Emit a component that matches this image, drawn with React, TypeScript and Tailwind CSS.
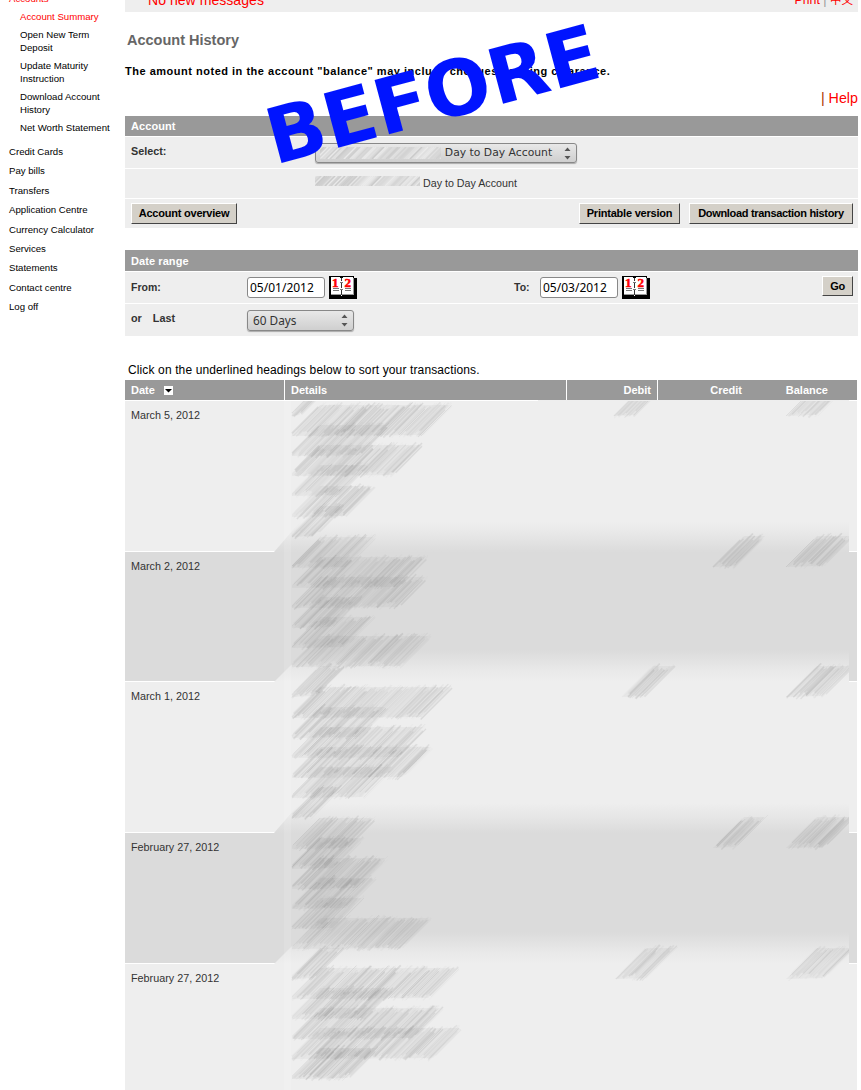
import React from "react";

type Smear = { bottom: number; right: number; left?: number; height?: number; tone?: number };

const detailLines: Smear[] = [
  { bottom: 418, right: 330 }, { bottom: 438, right: 452 }, { bottom: 458, right: 390 },
  { bottom: 478, right: 422 }, { bottom: 498, right: 368 }, { bottom: 519, right: 375 },
  { bottom: 539, right: 344 },
  { bottom: 570, right: 376 }, { bottom: 590, right: 428 }, { bottom: 610, right: 428 },
  { bottom: 630, right: 362 }, { bottom: 650, right: 375 }, { bottom: 669, right: 431 },
  { bottom: 699, right: 344 },
  { bottom: 720, right: 452 }, { bottom: 740, right: 388 }, { bottom: 760, right: 426 },
  { bottom: 780, right: 433 }, { bottom: 800, right: 393 }, { bottom: 820, right: 342 },
  { bottom: 851, right: 376 }, { bottom: 871, right: 364 }, { bottom: 891, right: 388 },
  { bottom: 911, right: 376 }, { bottom: 931, right: 364 }, { bottom: 951, right: 431 },
  { bottom: 981, right: 344 },
  { bottom: 1001, right: 459 }, { bottom: 1021, right: 393 }, { bottom: 1041, right: 443 },
  { bottom: 1061, right: 462 }, { bottom: 1081, right: 378, tone: 1.3 },
];

const amounts: Smear[] = [
  { left: 614, bottom: 418, right: 668 }, { left: 786, bottom: 418, right: 850 },
  { left: 713, bottom: 569, right: 768 }, { left: 786, bottom: 569, right: 856 },
  { left: 622, bottom: 699, right: 677 }, { left: 786, bottom: 699, right: 856 },
  { left: 713, bottom: 850, right: 768 }, { left: 786, bottom: 850, right: 856 },
  { left: 615, bottom: 981, right: 677 }, { left: 786, bottom: 981, right: 856 },
];

const seeded = (seed: number) => {
  let s = seed * 7919 + 17;
  for (let i = 0; i < 3; i++) s = (s * 16807) % 2147483647;
  return () => {
    s = (s * 16807) % 2147483647;
    return s / 2147483647;
  };
};

function Streaks({ item, seed }: { item: Smear; seed: number }) {
  const rnd = seeded(seed);
  const left = item.left ?? 292;
  const h = item.height ?? 36;
  const tone = item.tone ?? 1;
  const cap = item.left ? 2 : 5;
  const run = h - cap;
  const top = item.bottom - h;
  const base = item.right - run;
  const out: React.ReactNode[] = [
    <polygon
      key="body"
      points={`${left},${item.bottom - 2} ${left},${item.bottom - cap} ${left + run - 3},${top + 3} ${item.right - 3},${top + 3} ${base},${item.bottom - 3}`}
      fill="#777"
      fillOpacity={0.065 * tone}
    />,
  ];
  for (let x = left - cap; x < base; x += 1.1) {
    const r = rnd();
    const o = (0.02 + r * r * 0.16) * tone;
    const start = Math.max(x + rnd() * 8, left);
    const end = Math.min(x + h - rnd() * 8, item.right);
    out.push(
      <line
        key={x}
        x1={start}
        y1={item.bottom - (start - x)}
        x2={end}
        y2={item.bottom - (end - x)}
        stroke="#777"
        strokeWidth={0.6 + rnd() * 1.3}
        strokeOpacity={o}
      />
    );
  }
  return <g>{out}</g>;
}

function Smudges() {
  return (
    <svg className="pointer-events-none absolute left-0 top-0" width="861" height="1090" viewBox="0 0 861 1090">
      <defs>
        <linearGradient id="darken" x1="0" y1="0" x2="0" y2="1">
          <stop offset="0" stopColor="#dbdbdb" stopOpacity="0" />
          <stop offset="0.45" stopColor="#dbdbdb" stopOpacity="0.4" />
          <stop offset="1" stopColor="#dbdbdb" />
        </linearGradient>
        <linearGradient id="lighten" x1="0" y1="0" x2="0" y2="1">
          <stop offset="0" stopColor="#eee" stopOpacity="0" />
          <stop offset="0.65" stopColor="#eee" stopOpacity="0.75" />
          <stop offset="1" stopColor="#eee" />
        </linearGradient>
        <clipPath id="tableArea"><rect x="291" y="401" width="558" height="689" /></clipPath>
        <filter id="soft"><feGaussianBlur stdDeviation="0.4" /></filter>
      </defs>
      <path d="M538 400.5H849" stroke="#eee" />
      {[552, 833].map((y) => (
        <polygon key={y} points={`274,${y} 300,${y - 30} 849,${y - 30} 849,${y}`} fill="url(#darken)" />
      ))}
      {[682, 964].map((y) => (
        <polygon key={y} points={`274,${y} 306,${y - 32} 849,${y - 32} 849,${y}`} fill="url(#lighten)" />
      ))}
      <rect x="284" y="401" width="7" height="689" fill="#fff" fillOpacity="0.12" />
      <g clipPath="url(#tableArea)">
        <g filter="url(#soft)">
          {detailLines.map((l, i) => <Streaks key={i} item={l} seed={i + 1} />)}
          {amounts.map((l, i) => <Streaks key={i} item={l} seed={i + 60} />)}
        </g>
      </g>
    </svg>
  );
}

function MaskedNumber({ width, height }: { width: number; height: number }) {
  const rnd = seeded(width);
  const lines: React.ReactNode[] = [];
  for (let x = -10; x < width; x += 2) {
    const light = rnd() > 0.5;
    lines.push(<line key={x} x1={x} y1={height} x2={x + height} y2={0} stroke={light ? "#fff" : "#aaa"} strokeOpacity={rnd() * 0.4} strokeWidth="1.4" />);
  }
  return (
    <svg width={width} height={height} className="shrink-0">
      <rect width={width} height={height} rx="3" fill="#dedede" />
      {lines}
    </svg>
  );
}

function Arrows() {
  return (
    <svg width="7" height="13" viewBox="0 0 7 13" className="shrink-0">
      <path d="M0.5 4 3.5 0.5 6.5 4ZM0.5 9 3.5 12.5 6.5 9Z" fill="#555" />
    </svg>
  );
}

function CalendarIcon() {
  return (
    <svg width="28" height="23" viewBox="0 0 28 23" className="shrink-0" shapeRendering="crispEdges">
      <path d="M0 0H25V2H28V23H0Z" fill="#000" />
      <path d="M2 1H11L12.5 3 14 1H24V18H14L12.5 20 11 18H2Z" fill="#fff" />
      <path d="M2 18.5H24.5V2" fill="none" stroke="#999" />
      <path d="M12.5 2V5M12.5 7V12M12.5 14V19" stroke="#333" />
      <path d="M11 6.5H14M11 13.5H14" stroke="#777" />
      <path d="M4 12.5H9.5M4 14.5H9.5M16 12.5H21.5M16 14.5H21.5" stroke="#777" />
      <g shapeRendering="auto" className="font-['Liberation_Serif',serif] text-[13px] font-bold" fill="#f00" stroke="#f00" strokeWidth="0.5">
        <text x="3" y="10.5">1</text>
        <text x="15.5" y="10.5">2</text>
      </g>
    </svg>
  );
}

function ClassicButton({ children, className }: { children: React.ReactNode; className: string }) {
  return (
    <button className={`shrink-0 whitespace-nowrap border border-t-white border-l-white border-b-[#444] border-r-[#444] bg-[#d4d0c8] p-0 text-center text-[11px] leading-[17px] font-bold text-black ${className}`}>
      {children}
    </button>
  );
}

const subLinks = [
  ["Open New Term", "Deposit"],
  ["Update Maturity", "Instruction"],
  ["Download Account", "History"],
  ["Net Worth Statement"],
];
const links = ["Credit Cards", "Pay bills", "Transfers", "Application Centre", "Currency Calculator", "Services", "Statements", "Contact centre", "Log off"];

const rows = [
  { date: "March 5, 2012", cls: "h-[150px] bg-[#eee]" },
  { date: "March 2, 2012", cls: "h-[129px] bg-[#dbdbdb]" },
  { date: "March 1, 2012", cls: "h-[150px] bg-[#eee]" },
  { date: "February 27, 2012", cls: "h-[130px] bg-[#dbdbdb]" },
  { date: "February 27, 2012", cls: "h-[127px] bg-[#eee]" },
];

const bar = "bg-[#999] pl-1.5 text-[11px] font-bold text-white tracking-[0.08px]";

export default function App() {
  return (
    <div className="relative flex h-[1090px] w-[861px] overflow-hidden bg-white font-['Liberation_Sans',Arial,sans-serif] text-[11px] text-[#333]">
      <nav className="w-[125px] shrink-0 text-[9.65px] leading-[13px] text-black">
        <div className="-mt-2 ml-[9px] h-[13px] text-[#f00]">Accounts</div>
        <ul className="ml-5 mt-[5px] flex flex-col gap-[5px]">
          <li className="text-[#f00]">Account Summary</li>
          {subLinks.map((s) => (
            <li key={s[0]}>{s.map((t) => <div key={t}>{t}</div>)}</li>
          ))}
        </ul>
        <ul className="ml-[9px] mt-[8px]">
          {links.map((l) => <li key={l} className="h-[19.4px] leading-[19.4px]">{l}</li>)}
        </ul>
      </nav>

      <main className="w-[733px] shrink-0">
        <div className="flex h-3 items-end justify-between bg-[#eee] pl-[23px] pr-[5px] text-[13px] leading-[18px] text-[#f00]">
          <span className="mb-[3px] text-[14.1px]">No new messages</span>
          <span className="mb-[3px] whitespace-nowrap font-['Liberation_Sans','Noto_Sans_CJK_SC',sans-serif] text-[12.4px]">Print <span className="text-[#999]">|</span> <span className="text-[11.5px]">中文</span></span>
        </div>
        <h1 className="mt-[19px] pl-[2px] text-[14.5px] leading-[18px] font-bold text-[#666]">Account History</h1>
        <p className="mt-[15px] h-[14px] whitespace-nowrap text-[11px] tracking-[0.51px] leading-[14px] font-bold text-black">
          The amount noted in the account "balance" may include cheques pending clearance.
        </p>
        <div className="mt-[11px] h-[27px] text-right text-[14.3px] leading-[18px] text-[#f00]"><span className="text-[#a30]">|</span> Help</div>

        <section>
          <div className={`${bar} h-5 leading-5`}>Account</div>
          <div className="mt-px flex h-[31px] bg-[#eee]">
            <div className="w-[190px] pl-1.5 pt-[7px] text-[10.8px] leading-[14px] font-bold">Select:</div>
            <div className="mt-[6px] flex h-5 w-[262px] items-center justify-between rounded-[3px] border border-[#888] bg-gradient-to-b from-[#e8e8e8] to-[#cfcfcf] pl-1 pr-[5px] shadow-[0_1px_1px_#aaa]">
              <MaskedNumber width={121} height={12} />
              <span className="-ml-[8px] whitespace-nowrap font-['DejaVu_Sans',sans-serif] text-[10.8px] leading-[18px]">Day to Day Account</span>
              <Arrows />
            </div>
          </div>
          <div className="mt-px flex h-[29px] items-center bg-[#eee] pl-[190px]">
            <div className="mb-[5px] flex"><MaskedNumber width={105} height={10} /></div>
            <span className="ml-[3px] text-[10.7px]">Day to Day Account</span>
          </div>
          <div className="mt-px flex h-[29px] justify-between bg-[#eee] pl-1.5 pr-[5px] pt-1">
            <ClassicButton className="h-[21px] w-[106px] tracking-[-0.22px]">Account overview</ClassicButton>
            <div className="flex gap-[9px]">
              <ClassicButton className="h-[21px] w-[101px] tracking-[-0.22px]">Printable version</ClassicButton>
              <ClassicButton className="h-[21px] w-[164px] tracking-[-0.32px]">Download transaction history</ClassicButton>
            </div>
          </div>
        </section>

        <section className="mt-[22px]">
          <div className={`${bar} h-[21px] leading-[22px]`}>Date range</div>
          <div className="mt-px flex h-[31px] bg-[#eee] text-[10.5px] font-bold">
            <div className="w-[122px] pl-1.5 pt-2 leading-[14px]">From:</div>
            <input className="mt-[5px] h-[21px] w-[78px] rounded-[3px] border border-[#888] bg-white px-[2px] font-['Noto_Sans',sans-serif] text-[12px] font-normal text-black" defaultValue="05/01/2012" />
            <div className="ml-1 mt-1"><CalendarIcon /></div>
            <div className="ml-[157px] w-[26px] pt-2 leading-[14px]">To:</div>
            <input className="mt-[5px] h-[21px] w-[78px] rounded-[3px] border border-[#888] bg-white px-[2px] font-['Noto_Sans',sans-serif] text-[12px] font-normal text-black" defaultValue="05/03/2012" />
            <div className="ml-1 mt-1"><CalendarIcon /></div>
            <div className="ml-auto mr-[5px] mt-1"><ClassicButton className="h-5 w-[31px] tracking-[-0.5px]">Go</ClassicButton></div>
          </div>
          <div className="mt-px flex h-8 bg-[#eee]">
            <div className="flex w-[122px] gap-[11px] pl-1.5 pt-[7px] text-[10.8px] leading-[14px] font-bold"><span>or</span><span>Last</span></div>
            <div className="mt-[6px] flex h-[21px] w-[107px] items-center justify-between rounded-[3px] border border-[#888] bg-gradient-to-b from-[#e8e8e8] to-[#cfcfcf] pl-[5px] pr-[5px] font-['Noto_Sans',sans-serif] text-[11.8px] shadow-[0_1px_1px_#aaa]">
              60 Days <Arrows />
            </div>
          </div>
        </section>

        <p className="mt-[26px] h-[18px] pl-[3px] text-[12px] leading-4 tracking-[0.125px] text-black">Click on the underlined headings below to sort your transactions.</p>

        <section className="w-[732px]">
          <div className="flex h-5 gap-px text-[11px] leading-5 font-bold text-white">
            <div className="flex w-[159px] items-center bg-[#999] pl-1.5">
              Date
              <svg width="9" height="9" viewBox="0 0 9 9" className="ml-[9px] mt-px"><rect width="9" height="9" fill="#fff" /><path d="M1 3H8L4.5 6.5Z" fill="#000" /></svg>
            </div>
            <div className="w-[281px] bg-[#999] pl-1.5">Details</div>
            <div className="w-[90px] bg-[#999] pr-1.5 text-right">Debit</div>
            <div className="flex w-[199px] bg-[#999]"><span className="w-[84px] text-right">Credit</span><span className="w-[86px] text-right">Balance</span></div>
          </div>
          <div className="mt-px flex flex-col gap-px">
            {rows.map((r, i) => (
              <div key={i} className={`${r.cls} pl-1.5 pt-[7px] text-[10.8px] leading-[14px]`}>{r.date}</div>
            ))}
          </div>
        </section>
      </main>

      <Smudges />
      <svg className="pointer-events-none absolute left-0 top-0" width="861" height="240">
        <text transform="translate(274.8 164.8) rotate(-15)" className="font-['DejaVu_Sans',sans-serif] text-[77px] font-bold" fill="#0014ff">BEFORE</text>
      </svg>
    </div>
  );
}
